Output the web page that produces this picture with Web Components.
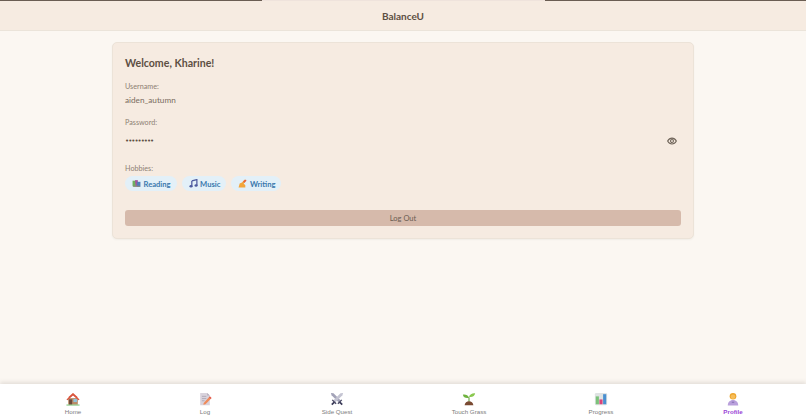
<!DOCTYPE html>
<html lang="en">
<head>
<meta charset="utf-8">
<title>BalanceU</title>
<style>
  html, body { margin: 0; height: 100%; }
  body { background: #fbf7f2; font-family: Lato, sans-serif; overflow: hidden; }
  #app { display: flex; flex-direction: column; height: 420px; }
</style>
</head>
<body>
<div id="app">
  <app-header>BalanceU</app-header>
  <page-main>
    <profile-card heading="Welcome, Kharine!">
      <info-field label="Username:">aiden_autumn</info-field>
      <password-field label="Password:" value="•••••••••"></password-field>
      <hobby-list label="Hobbies:">
        <hobby-chip icon="books">Reading</hobby-chip>
        <hobby-chip icon="music">Music</hobby-chip>
        <hobby-chip icon="writing">Writing</hobby-chip>
      </hobby-list>
      <logout-button>Log Out</logout-button>
    </profile-card>
  </page-main>
  <bottom-nav>
    <nav-item icon="home">Home</nav-item>
    <nav-item icon="log">Log</nav-item>
    <nav-item icon="swords">Side Quest</nav-item>
    <nav-item icon="sprout">Touch Grass</nav-item>
    <nav-item icon="chart">Progress</nav-item>
    <nav-item icon="profile" active>Profile</nav-item>
  </bottom-nav>
</div>

<script>
// little colour pictures, same idea as the emoji in the original
const ICONS = {
  books: `<svg viewBox="0 0 16 16" width="9" height="9"><rect x="1" y="3" width="6" height="10" fill="#6fae5e"/><rect x="6" y="2" width="5" height="11" fill="#a0579f" transform="rotate(-8 8 8)"/><rect x="9" y="5" width="6" height="9" fill="#4f7fb8"/><rect x="2" y="12" width="12" height="2" fill="#8a8a80"/></svg>`,
  music: `<svg viewBox="0 0 16 16" width="9" height="9"><path d="M5 3.500 14 1v10.500" fill="none" stroke="#4d5a9e" stroke-width="2.200"/><path d="M5 3.500V13" fill="none" stroke="#4d5a9e" stroke-width="2.200"/><ellipse cx="3.600" cy="13" rx="2.800" ry="2.200" fill="#4d5a9e"/><ellipse cx="12.600" cy="11.600" rx="2.800" ry="2.200" fill="#4d5a9e"/></svg>`,
  writing: `<svg viewBox="0 0 16 16" width="9" height="9"><path d="M1 15 3 8l4-2 5-5 2 2-4 5 3 3v4z" fill="#f2a63c"/><path d="M9 4l5-3 1 2-4 4z" fill="#e8603c"/></svg>`,
  home: `<svg viewBox="0 0 16 16" width="14" height="14"><rect x="2.500" y="7" width="11" height="7.500" fill="#b98a66"/><path d="M3 5.500 8 1l5 4.500v2L8 3 3 7.500z" fill="#e5684b"/><path d="M0.500 8.500 8 1.500l7.500 7-1.200 1L8 4 1.700 9.500z" fill="#d9553f"/><rect x="3.500" y="8.500" width="3.500" height="6" fill="#6b4a3a"/><rect x="8.500" y="8" width="4" height="3.500" fill="#8fc4dd"/><rect x="0.500" y="14.300" width="15" height="1.200" fill="#7cc47a"/></svg>`,
  log: `<svg viewBox="0 0 16 16" width="14" height="14"><path d="M2.500 1h8l3 3v11h-11z" fill="#d9d3dc"/><path d="M10.500 1v3h3z" fill="#b5adbb"/><path d="M4.500 5h5M4.500 7.500h5M4.500 10h3" stroke="#a9a2b0" stroke-width=".9"/><path d="M6.500 12.500 13 5.500l2 2-6.500 6.500-2.400.6z" fill="#ef8a5a"/><path d="M12.600 5.900l1-1 2 2-1 1z" fill="#e2574c"/></svg>`,
  swords: `<svg viewBox="0 0 16 16" width="14" height="14"><path d="M1 1l3 .4 8 8-2.200 2.200-8-8z" fill="#a3a3b8"/><path d="M15 1l-3 .4-8 8 2.200 2.200 8-8z" fill="#c4c4d2"/><path d="M2.600 9l4.400 4.400M13.400 9 9 13.400" stroke="#4a4a66" stroke-width="1.600"/><path d="M5 11.500 2 14.500M11 11.500l3 3" stroke="#3d3d5a" stroke-width="2"/></svg>`,
  sprout: `<svg viewBox="0 0 16 16" width="14" height="14"><path d="M7.400 11V6h1.200v5z" fill="#5a9a35"/><path d="M8 6.500C7 3.500 4 2.500 1 3c.5 3 3.500 4.500 7 3.500z" fill="#6fb33f"/><path d="M8 5.500C9 2.500 12 1 15 1.500c-.3 3-3.500 5-7 4z" fill="#8ac84f"/><path d="M3 15c.3-3 2.500-4.500 5-4.500s4.700 1.500 5 4.500z" fill="#7a4a32"/></svg>`,
  chart: `<svg viewBox="0 0 16 16" width="14" height="14"><rect x="1" y="1" width="14" height="14" rx="1.500" fill="#dfe3e3"/><rect x="2" y="5" width="3.600" height="9" fill="#7cc27a"/><rect x="6.200" y="8.500" width="3.600" height="5.500" fill="#d9447a"/><rect x="10.400" y="2.500" width="3.600" height="11.500" fill="#4a8fd0"/></svg>`,
  profile: `<svg viewBox="0 0 16 16" width="14" height="14"><path d="M2 15.500c0-4 2.500-6.500 6-6.500s6 2.500 6 6.500z" fill="#b9a0dc"/><circle cx="8" cy="4.800" r="3.800" fill="#eda52c"/><circle cx="8" cy="5.500" r="2.600" fill="#f6bd5a"/><rect x="6.600" y="11" width="2.800" height="1.500" fill="#8f78ba"/></svg>`
};

class AppHeader extends HTMLElement {
  constructor() {
    super();
    this.attachShadow({ mode: "open" }).innerHTML = `
    <style>
      :host { display: block; background: #f6ebe1; border-bottom: 1px solid #ebe4da; }
      .strip { display: grid; grid-template-columns: 262px 283px 1fr; height: 1px; background: #6a5d53; }
      .strip i { background: #efe3dc; grid-column: 2; }
      h1 {
        margin: 0; height: 29px; display: flex; align-items: center; justify-content: center;
        font: 700 10px Lato, sans-serif; color: #5d4f43;
      }
    </style>
    <div class="strip"><i></i></div>
    <h1><slot></slot></h1>`;
  }
}
customElements.define("app-header", AppHeader);

class PageMain extends HTMLElement {
  constructor() {
    super();
    this.attachShadow({ mode: "open" }).innerHTML = `
    <style>
      :host { display: block; flex: 1; padding: 11px 112px 0; }
    </style>
    <slot></slot>`;
  }
}
customElements.define("page-main", PageMain);

class ProfileCard extends HTMLElement {
  constructor() {
    super();
    this.attachShadow({ mode: "open" }).innerHTML = `
    <style>
      :host {
        display: block; background: #f6ebe1; border: 1px solid #ece3d8; border-radius: 5px;
        padding: 12px; box-shadow: 0 1px 2px rgba(93,79,67,.06);
      }
      h2 { margin: 0 0 11px; font: 700 10.600px/16px Lato, sans-serif; color: #5d4f43; }
    </style>
    <h2></h2>
    <slot></slot>`;
    this.shadowRoot.querySelector("h2").textContent = this.getAttribute("heading");
  }
}
customElements.define("profile-card", ProfileCard);

class InfoField extends HTMLElement {
  constructor() {
    super();
    this.attachShadow({ mode: "open" }).innerHTML = `
    <style>
      :host { display: block; margin-bottom: 12px; }
      label { display: block; font: 400 7.200px/10px Lato, sans-serif; color: #8d7f73; margin-bottom: 2px; }
      div { font: 400 8.200px/12px Lato, sans-serif; color: #7a6c60; }
    </style>
    <label></label>
    <div><slot></slot></div>`;
    this.shadowRoot.querySelector("label").textContent = this.getAttribute("label");
  }
}
customElements.define("info-field", InfoField);

class PasswordField extends HTMLElement {
  constructor() {
    super();
    this.attachShadow({ mode: "open" }).innerHTML = `
    <style>
      :host { display: block; margin-bottom: 13px; }
      label { display: block; font: 400 7.200px/10px Lato, sans-serif; color: #8d7f73; margin-bottom: 3px; }
      .row { display: flex; align-items: center; justify-content: space-between; height: 20px; padding-right: 4px; }
      span { font: 400 7px/12px "DejaVu Sans", sans-serif; letter-spacing: -1px; color: #5d4f43; }
      svg { display: block; }
    </style>
    <label></label>
    <div class="row">
      <span></span>
      <svg viewBox="0 0 24 24" width="10" height="10" fill="none" stroke="#6f6459" stroke-width="2.600">
        <path d="M1.500 12S5.500 5 12 5s10.500 7 10.500 7-4 7-10.500 7S1.500 12 1.500 12z"/>
        <circle cx="12" cy="12" r="3.500"/>
      </svg>
    </div>`;
    this.shadowRoot.querySelector("label").textContent = this.getAttribute("label");
    this.shadowRoot.querySelector("span").textContent = this.getAttribute("value");
  }
}
customElements.define("password-field", PasswordField);

class HobbyList extends HTMLElement {
  constructor() {
    super();
    this.attachShadow({ mode: "open" }).innerHTML = `
    <style>
      :host { display: block; margin-bottom: 19px; }
      label { display: block; font: 400 7.200px/10px Lato, sans-serif; color: #8d7f73; margin-bottom: 2px; }
      .chips { display: flex; gap: 5px; }
    </style>
    <label></label>
    <div class="chips"><slot></slot></div>`;
    this.shadowRoot.querySelector("label").textContent = this.getAttribute("label");
  }
}
customElements.define("hobby-list", HobbyList);

class HobbyChip extends HTMLElement {
  constructor() {
    super();
    this.attachShadow({ mode: "open" }).innerHTML = `
    <style>
      :host {
        display: flex; align-items: center; gap: 2.500px; height: 15px; padding: 0 6px 0 7px;
        background: #e3f0f8; border-radius: 8px;
        font: 700 7.600px Lato, sans-serif; color: #3a78ad;
      }
      svg { display: block; }
    </style>
    ${ICONS[this.getAttribute("icon")]}<slot></slot>`;
  }
}
customElements.define("hobby-chip", HobbyChip);

class LogoutButton extends HTMLElement {
  constructor() {
    super();
    this.attachShadow({ mode: "open" }).innerHTML = `
    <style>
      :host { display: block; }
      button {
        display: block; width: 100%; height: 16px; padding: 0; border: 0; border-radius: 3px;
        background: #d6baab; color: #6b5d52; font: 400 7.500px Lato, sans-serif;
      }
    </style>
    <button><slot></slot></button>`;
  }
}
customElements.define("logout-button", LogoutButton);

class BottomNav extends HTMLElement {
  constructor() {
    super();
    this.attachShadow({ mode: "open" }).innerHTML = `
    <style>
      :host {
        display: grid; grid-template-columns: repeat(6, 132px); padding: 0 7px; height: 36px;
        background: #fff; box-shadow: 0 -2px 4px rgba(93,79,67,.14);
      }
    </style>
    <slot></slot>`;
  }
}
customElements.define("bottom-nav", BottomNav);

class NavItem extends HTMLElement {
  constructor() {
    super();
    const active = this.hasAttribute("active");
    this.attachShadow({ mode: "open" }).innerHTML = `
    <style>
      :host {
        display: flex; flex-direction: column; align-items: center; padding-top: 8px; gap: 2px;
        font: ${active ? 700 : 400} 6.200px/8px "Liberation Sans", sans-serif;
        color: ${active ? "#9b45d6" : "#7c7c7c"};
      }
      svg { display: block; }
    </style>
    ${ICONS[this.getAttribute("icon")]}<slot></slot>`;
  }
}
customElements.define("nav-item", NavItem);
</script>
</body>
</html>
